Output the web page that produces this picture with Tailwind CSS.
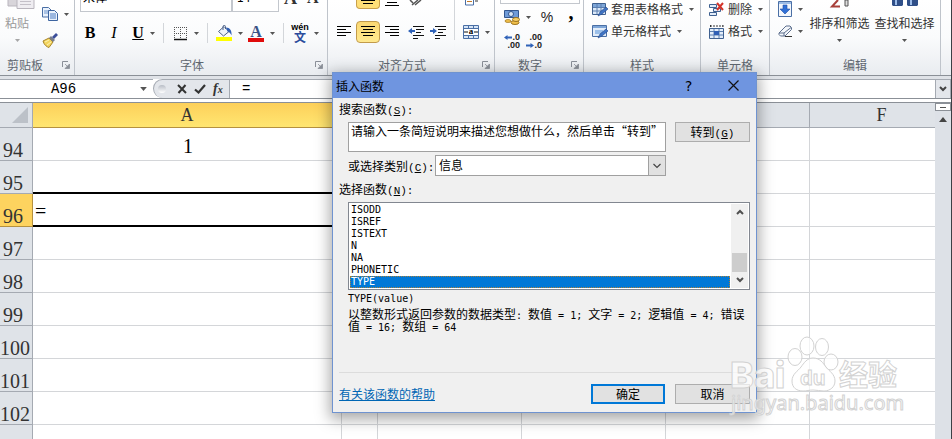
<!DOCTYPE html>
<html lang="zh-CN">
<head>
    <meta charset="UTF-8">
    <meta name="viewport" content="width=device-width, initial-scale=1.0">
    <title>插入函数</title>
    <script src="https://cdn.jsdelivr.net/npm/@tailwindcss/browser@4"></script>
</head>
<body class="relative h-screen overflow-hidden flex flex-col bg-white border-r border-[#3c4046] text-xs text-[#333] font-['Noto_Sans_CJK_SC',sans-serif]">
    <!-- Shared icons -->
    <svg class="hidden">
        <symbol id="down" viewBox="0 0 5 3"><path d="M0 0h5L2.5 3z" fill="#555"/></symbol>
        <symbol id="launcher" viewBox="0 0 8 8"><path d="M.5 6V.5H6" fill="none" stroke="#8a8f98"/><path d="M3 3l3 3M7.500 3v4.500H3z" fill="#8a8f98" stroke="#8a8f98" stroke-width=".8"/></symbol>
        <symbol id="grid" viewBox="0 0 16 15"><path d="M.5 1.500h13v11H.5z" fill="#dce9f8" stroke="#3f6190"/><path d="M1 2h12v3H1z" fill="#7ea6d8"/><path d="M1 5.500h12M1 9h12M5 2v10M9 2v10" stroke="#5a7fb0"/></symbol>
    </svg>

    <!-- Ribbon -->
    <header class="flex shrink-0 h-[76px] border-b border-[#8b9097] bg-linear-to-b from-white via-[#fafbfc] to-[#e9ecf0]">
        <section class="flex flex-col w-[75px] shrink-0 border-r border-[#bfc4cb]">
            <div class="flex h-[54px]">
                <button class="flex flex-col items-center w-[34px] text-[#9a9a9a]">
                    <svg class="w-7 h-[9px] ml-2" viewBox="0 0 28 9"><path d="M1 0v6h12V0" fill="#d8d5da" stroke="#b9b5bd"/><path d="M10 0v8.500h17V0" fill="#efedf1" stroke="#b9b5bd"/><path d="M13 1.500h11M13 4.500h11" stroke="#c4c0c8"/></svg>
                    <span class="leading-7">粘贴</span>
                    <svg class="w-[5px] h-[3px] mt-0.5 opacity-50"><use href="#down"/></svg>
                </button>
                <div class="flex flex-col pl-2">
                    <button class="flex items-center gap-1.5 h-7" aria-label="复制">
                        <svg class="w-4 h-3.5" viewBox="0 0 16 14"><path d="M.5.5h6l2.500 2.500v7H.5z" fill="#eaf2fc" stroke="#4a6fa5"/><path d="M2 4h5M2 6h5" stroke="#6d94cc"/><path d="M6.500 3.500h6L15.500 6.500v7h-9z" fill="#eaf2fc" stroke="#3d64a0"/><path d="M8 7h6M8 9h6M8 11h6" stroke="#4d7cc4"/></svg>
                        <svg class="w-[5px] h-[3px]"><use href="#down"/></svg>
                    </button>
                    <button class="flex items-center h-6" aria-label="格式刷">
                        <svg class="w-4 h-[15px]" viewBox="0 0 16 15"><path d="M1 8l6-3 4 4-4 5.500c-2-.5-5-2.500-6-6.500z" fill="#f2d45e" stroke="#a8842a"/><path d="M3 9l4-2M5 12l4-3" stroke="#fff2b0"/><path d="M7 5l2-2 4 4-2 2z" fill="#777d8c"/><path d="M10 4l4-4 2 2-4 4z" fill="#3c4f9a"/></svg>
                    </button>
                </div>
            </div>
            <footer class="flex items-center h-[21px] text-[#5f6770]"><span class="flex-1 text-center -ml-3">剪贴板</span><svg class="w-2 h-2 mr-1"><use href="#launcher"/></svg></footer>
        </section>

        <section class="flex flex-col w-[253px] shrink-0 border-r border-[#bfc4cb]">
            <div class="flex h-3 pl-[5px] overflow-hidden items-end">
                <select aria-label="字体" class="appearance-none w-[152px] h-6 px-0.5 pb-1.5 shrink-0 bg-white border border-[#c3c7cd] text-black"><option>宋体</option></select>
                <select aria-label="字号" class="appearance-none w-[47px] h-6 px-1 pb-1.5 shrink-0 bg-white border border-[#c3c7cd] text-black"><option>14</option></select>
                <button class="pl-[5px] pb-1.5 leading-4 text-lg font-bold font-['Liberation_Serif',serif]">A</button>
                <button class="pl-2.5 pb-1.5 leading-4 text-base font-bold font-['Liberation_Serif',serif]">A</button>
            </div>
            <div class="flex items-center h-[42px] pl-[3px] text-black">
                <button class="w-6 text-base font-bold font-['Liberation_Serif',serif]">B</button>
                <button class="w-6 text-base italic font-['Liberation_Serif',serif]">I</button>
                <button class="w-6 text-base font-bold underline font-['Liberation_Serif',serif]">U</button>
                <svg class="w-[5px] h-[3px]"><use href="#down"/></svg>
                <span class="w-px h-5 mx-2 bg-[#d3d6da]"></span>
                <button class="flex items-center gap-1.5" aria-label="边框">
                    <svg class="w-4 h-4" viewBox="0 0 16 16"><path d="M2.500 2v11M8.500 2v11M14.500 2v11M2 2.500h13M2 8.500h13" fill="none" stroke="#555" stroke-dasharray="1 1"/><path d="M2 14.500h13" stroke="#111" stroke-width="1.500"/></svg>
                    <svg class="w-[5px] h-[3px]"><use href="#down"/></svg>
                </button>
                <span class="w-px h-5 mx-2 bg-[#d3d6da]"></span>
                <button class="flex items-center gap-1.5" aria-label="填充颜色">
                    <svg class="w-4 h-4" viewBox="0 0 16 16"><path d="M2.500 6.500L8 1.500l5 5-5.500 4.500z" fill="#eef3fa" stroke="#4d6288"/><path d="M7 5V1.500c0-1.500 2.500-1.500 2.500 0V4" fill="none" stroke="#4d6288"/><path d="M10 2.500c4 0 6 3 5.500 8-1-2-2-3.500-4-4z" fill="#2f5fb5"/><path d="M0 12h16v4H0z" fill="#ff0"/></svg>
                    <svg class="w-[5px] h-[3px]"><use href="#down"/></svg>
                </button>
                <button class="flex items-center gap-1.5 ml-[5px]" aria-label="字体颜色">
                    <span class="flex flex-col items-center w-4 border-b-4 border-[#e00b0b] leading-[13px] text-base font-bold text-[#3a5286] font-['Liberation_Serif',serif]">A</span>
                    <svg class="w-[5px] h-[3px]"><use href="#down"/></svg>
                </button>
                <span class="w-px h-5 mx-2 bg-[#d3d6da]"></span>
                <button class="flex items-center gap-1.5">
                    <span class="flex flex-col items-center w-4 text-[9px] leading-[7px]"><span class="font-bold font-['Liberation_Sans',sans-serif]">wén</span><span class="text-xs leading-[11px] font-bold text-[#2c4c9c]">文</span></span>
                    <svg class="w-[5px] h-[3px]"><use href="#down"/></svg>
                </button>
            </div>
            <footer class="flex items-center h-[21px] text-[#5f6770]"><span class="flex-1 text-center">字体</span><svg class="w-2 h-2 mr-1 ml-1.5"><use href="#launcher"/></svg></footer>
        </section>

        <section class="flex flex-col w-[167px] shrink-0 border-r border-[#bfc4cb]">
            <div class="flex h-[54px]">
                <div class="flex flex-col pl-1">
                    <div class="flex h-3">
                        <button class="w-6 h-[9px] ml-6 flex justify-center bg-[#ffdf77] border border-t-0 border-[#c9a04a] rounded-b-sm" aria-label="垂直居中"><svg class="w-3.5 h-2" viewBox="0 0 14 8"><path d="M0 .5h14M2 3.500h10" stroke="#000"/></svg></button>
                        <button class="w-6 h-2 flex justify-center" aria-label="底端对齐"><svg class="w-3.5 h-2" viewBox="0 0 14 8"><path d="M2 2.500h10M0 5.500h14" stroke="#000"/></svg></button>
                        <button class="h-2 ml-1" aria-label="方向"><svg class="w-4 h-2" viewBox="0 0 16 8"><path d="M2 0l3 3M4 5l6-5M7 5l6-5" stroke="#555" stroke-width="1.500"/></svg></button>
                    </div>
                    <div class="flex items-center h-10">
                        <button class="w-6 h-[22px] flex justify-center items-center" aria-label="左对齐"><svg class="w-3.5 h-3" viewBox="0 0 14 12"><path d="M0 .5h14M0 3.500h9M0 6.500h14M0 9.500h9" stroke="#000"/></svg></button>
                        <button class="w-6 h-[22px] flex justify-center items-center bg-linear-to-b from-[#fbd873] to-[#ffe98f] border border-[#c29b4b] rounded-sm" aria-label="居中"><svg class="w-3.5 h-3 shrink-0" viewBox="0 0 14 12"><path d="M0 .5h14M2 3.500h10M0 6.500h14M2 9.500h10" stroke="#000"/></svg></button>
                        <button class="w-6 h-[22px] flex justify-center items-center" aria-label="右对齐"><svg class="w-3.5 h-3" viewBox="0 0 14 12"><path d="M0 .5h14M5 3.500h9M0 6.500h14M5 9.500h9" stroke="#000"/></svg></button>
                        <button class="ml-1" aria-label="减少缩进"><svg class="w-4 h-3.5" viewBox="0 0 16 14"><path d="M5 1.500h11M8 4.500h8M8 7.500h5M5 10.500h11M5 13.500h5" stroke="#111"/><path d="M0 6l4-3v2h3v2H4v2z" fill="#2f62b8"/></svg></button>
                        <button class="ml-1.5" aria-label="增加缩进"><svg class="w-4 h-3.5" viewBox="0 0 16 14"><path d="M5 1.500h11M8 4.500h8M8 7.500h5M5 10.500h11M5 13.500h5" stroke="#111"/><path d="M7 6L3 3v2H0v2h3v2z" fill="#2f62b8"/></svg></button>
                    </div>
                </div>
                <span class="w-px h-10 mx-2 bg-[#d3d6da]"></span>
                <div class="flex flex-col">
                    <button class="flex items-start h-3" aria-label="自动换行"><svg class="w-4 h-1.5" viewBox="0 0 16 6"><path d="M2.500 0v5h8V0" fill="#fff" stroke="#4a6fa5"/><path d="M4 1.500h5" stroke="#c27a2a"/><path d="M12 1h3" stroke="#333"/></svg></button>
                    <button class="flex items-center gap-1.5 h-10" aria-label="合并后居中">
                        <svg class="w-4 h-3.5" viewBox="0 0 16 14"><path d="M.5.5h15v13H.5z" fill="#d5e4f6" stroke="#4a6fa5"/><path d="M1 4h14v6H1z" fill="#fff"/><path d="M5.500 1v3M10.500 1v3M5.500 10v3M10.500 10v3M1 3.500h14M1 10.500h14" stroke="#4a6fa5"/><text x="8" y="9" text-anchor="middle" font-size="9" font-weight="bold" font-family="Liberation Serif">a</text><path d="M1 7h4M11 7h4" stroke="#111"/></svg>
                        <svg class="w-[5px] h-[3px]"><use href="#down"/></svg>
                    </button>
                </div>
            </div>
            <footer class="flex items-center h-[21px] text-[#5f6770]"><span class="flex-1 text-center">对齐方式</span><svg class="w-2 h-2 mr-1 ml-1.5"><use href="#launcher"/></svg></footer>
        </section>

        <section class="flex flex-col w-[89px] shrink-0 border-r border-[#bfc4cb]">
            <div class="flex flex-col h-[54px]">
                <div class="h-1 ml-[5px] w-20 bg-white border border-t-0 border-[#c3c7cd]"></div>
                <div class="flex items-center h-[26px] pl-[9px]">
                    <button class="flex items-center gap-1.5" aria-label="会计数字格式">
                        <svg class="w-4 h-4" viewBox="0 0 16 16"><path d="M.5 1.500h14v7H.5z" fill="#6f9bd8" stroke="#33568f"/><circle cx="7" cy="5" r="2.500" fill="#dbe8f8" stroke="#33568f"/><ellipse cx="11" cy="13.500" rx="4" ry="2" fill="#f1c04a" stroke="#9c7420"/><ellipse cx="12" cy="10.500" rx="3.500" ry="2" fill="#f6d06a" stroke="#9c7420"/><ellipse cx="4" cy="12" rx="3" ry="1.500" fill="#f1c04a" stroke="#9c7420" stroke-width=".7"/></svg>
                        <svg class="w-[5px] h-[3px]"><use href="#down"/></svg>
                    </button>
                    <button class="w-6 ml-1 text-sm leading-4 font-['Liberation_Sans',sans-serif] text-[#222]">%</button>
                    <button class="w-6 pb-2.5 text-xl leading-3 font-bold font-['Liberation_Serif',serif] text-black">,</button>
                </div>
                <div class="flex items-center h-[22px] pl-[9px] gap-1.5 text-[9px] leading-[8px] font-bold font-['Liberation_Sans',sans-serif] text-[#222]">
                    <button class="flex flex-col items-end w-4"><span class="flex items-center"><svg class="w-2 h-[5px]" viewBox="0 0 8 5"><path d="M0 2.500L3.500 0v1.500H8v2H3.500V5z" fill="#2f62b8"/></svg>.0</span><span>.00</span></button>
                    <button class="flex flex-col items-end w-4"><span>.00</span><span class="flex items-center"><svg class="w-2 h-[5px]" viewBox="0 0 8 5"><path d="M8 2.500L4.500 0v1.500H0v2h4.500V5z" fill="#2f62b8"/></svg>.0</span></button>
                </div>
            </div>
            <footer class="flex items-center h-[21px] text-[#5f6770]"><span class="flex-1 text-center">数字</span><svg class="w-2 h-2 mr-1 ml-1.5"><use href="#launcher"/></svg></footer>
        </section>

        <section class="flex flex-col w-[117px] shrink-0 border-r border-[#bfc4cb]">
            <div class="flex flex-col h-[54px] pl-2 whitespace-nowrap">
                <button class="flex items-center h-[18px]"><svg class="w-4 h-[15px] mr-[3px]" viewBox="0 0 16 15"><use href="#grid"/><path d="M6 14l2-4 6-5 2 2-6 5z" fill="#3f74c4" stroke="#24468a" stroke-width=".6"/></svg>套用表格格式<svg class="w-[5px] h-[3px] ml-1.5"><use href="#down"/></svg></button>
                <button class="flex items-center h-[26px]"><svg class="w-4 h-[15px] mr-[3px]" viewBox="0 0 16 15"><path d="M.5 1.500h14v11H.5z" fill="#e3edf9" stroke="#4a6fa5"/><path d="M1 2h13v2H1z" fill="#7ea6d8"/><path d="M3 6h8v4H3z" fill="#9cc0ea"/><path d="M6 14l2-4 6-5 2 2-6 5z" fill="#3f74c4" stroke="#24468a" stroke-width=".6"/></svg>单元格样式<svg class="w-[5px] h-[3px] ml-1.5"><use href="#down"/></svg></button>
            </div>
            <footer class="h-[21px] leading-[21px] text-center text-[#5f6770]">样式</footer>
        </section>

        <section class="flex flex-col w-[69px] shrink-0 border-r border-[#bfc4cb]">
            <div class="flex flex-col h-[54px] pl-2 whitespace-nowrap">
                <button class="flex items-center h-[18px]"><svg class="w-4 h-[15px] mr-[3px]" viewBox="0 0 16 15"><path d="M.5 2.500h7v3h-7zM.5 10.500h7v3h-7zM4.500 6.500h7v3h-7z" fill="#e3edf9" stroke="#3f6190"/><path d="M8 1l6 7M14 1L8 8" stroke="#d4342a" stroke-width="2"/></svg>删除<svg class="w-[5px] h-[3px] ml-1.5"><use href="#down"/></svg></button>
                <button class="flex items-center h-[26px]"><svg class="w-4 h-[15px] mr-[3px]" viewBox="0 0 16 15"><path d="M1.500 1v2M14 1v2M1 2h13" stroke="#333" stroke-dasharray="2 1"/><path d="M.5 4.500h14v10H.5z" fill="#e3edf9" stroke="#3f6190"/><path d="M1 7.500h13M1 11h13M5 5v9M10 5v9" stroke="#5a7fb0"/><path d="M5 7h5v4H5z" fill="#2f5fb5"/></svg>格式<svg class="w-[5px] h-[3px] ml-1.5"><use href="#down"/></svg></button>
            </div>
            <footer class="h-[21px] leading-[21px] text-center text-[#5f6770]">单元格</footer>
        </section>

        <section class="flex flex-col w-[171px] shrink-0 border-r border-[#bfc4cb]">
            <div class="flex h-[54px] pl-2 whitespace-nowrap">
                <div class="flex flex-col w-[31px]">
                    <button class="flex items-center gap-1.5 h-[18px]" aria-label="填充"><svg class="w-3.5 h-4" viewBox="0 0 14 16"><path d="M.5.5h13v15H.5z" fill="#f2f6fc" stroke="#4a6fa5"/><path d="M1 1h12v2H1z" fill="#9cbce6"/><path d="M5 4h4v4h3l-5 5-5-5h3z" fill="#2f6fd6" stroke="#1f4fa5" stroke-width=".6"/></svg><svg class="w-[5px] h-[3px]"><use href="#down"/></svg></button>
                    <button class="flex items-center gap-1.5 h-[26px]" aria-label="清除"><svg class="w-3.5 h-3" viewBox="0 0 14 12"><path d="M1 8l7-7h4l1.500 1.500v2L7 11H2.500L1 9.500z" fill="#f4f7fb" stroke="#5d6f8d"/><path d="M1 8h5l7-5.500M6 8v3" fill="none" stroke="#5d6f8d"/><path d="M7 11.500h7" stroke="#333"/></svg><svg class="w-[5px] h-[3px]"><use href="#down"/></svg></button>
                </div>
                <button class="flex flex-col items-center w-[61px]">
                    <svg class="w-6 h-[9px]" viewBox="0 0 24 9"><path d="M10 0L4 6.500h8" fill="none" stroke="#a8403a" stroke-width="2"/><path d="M17 0h3v6h-3z" fill="#ddd" stroke="#555"/></svg>
                    <span class="leading-7">排序和筛选</span>
                    <svg class="w-[5px] h-[3px] mt-0.5"><use href="#down"/></svg>
                </button>
                <button class="flex flex-col items-center w-[61px] ml-1">
                    <svg class="w-7 h-[9px]" viewBox="0 0 28 9"><path d="M1 0h11v5l-1 1H2L1 5zM16 0h11v5l-1 1h-9l-1-1z" fill="#2f4f88"/><path d="M5 0v5M20 0v5" stroke="#9bbbe8" stroke-width="2"/></svg>
                    <span class="leading-7">查找和选择</span>
                    <svg class="w-[5px] h-[3px] mt-0.5"><use href="#down"/></svg>
                </button>
            </div>
            <footer class="h-[21px] leading-[21px] text-center text-[#5f6770]">编辑</footer>
        </section>
    </header>

    <!-- Formula bar -->
    <div class="flex shrink-0 h-[23px] border-t-[3px] border-t-[#dfe2e7] border-b border-b-[#8b9097] bg-white text-black">
        <input aria-label="名称框" value="A96" class="w-[127px] border-t border-[#a5aab2] text-center text-[14px] leading-4 font-['Liberation_Mono',monospace]">
        <button class="w-[26px] flex items-center justify-center border-t border-[#a5aab2] pl-1.5" aria-label="名称列表"><svg class="w-[7px] h-1"><use href="#down"/></svg></button>
        <div class="flex items-center w-[77px] pl-1 gap-[7px] rounded-l-full border border-b-0 border-[#a5aab2] bg-[#e3e6eb]">
            <span class="w-2 h-2 mr-1 rounded-full bg-linear-to-b from-[#b8bdc6] to-white"></span>
            <button aria-label="取消输入"><svg class="w-2.5 h-2.5" viewBox="0 0 10 10"><path d="M1 1l8 8M8.500 1L1.500 9" stroke="#333" stroke-width="2"/></svg></button>
            <button aria-label="输入"><svg class="w-3 h-2.5" viewBox="0 0 12 10"><path d="M1 5.500l3.500 3L11 1" fill="none" stroke="#333" stroke-width="2.200"/></svg></button>
            <button class="text-sm leading-4 italic font-bold font-['Liberation_Serif',serif] text-[#333]">f<sub class="text-[10px] bottom-0">x</sub></button>
        </div>
        <input aria-label="编辑栏" value="=" class="flex-1 min-w-0 pl-3 border-t border-[#a5aab2] text-[14px] leading-4 font-['Liberation_Mono',monospace]">
        <button class="w-4 flex items-center justify-center bg-[#e3e6eb] border border-b-0 border-[#a5aab2]" aria-label="展开编辑栏"><svg class="w-2 h-1.5" viewBox="0 0 8 6"><path d="M1 1l3 3 3-3" fill="none" stroke="#444" stroke-width="2"/></svg></button>
    </div>

    <!-- Worksheet -->
    <main class="flex flex-1 min-h-0 mt-[3px] border-t border-[#8b9097]">
        <div class="flex-1 min-w-0 overflow-hidden">
            <table class="table-fixed w-[954px] border-separate border-spacing-0 text-xl leading-5 font-['Liberation_Serif',serif]">
                <colgroup>
                    <col class="w-[33px]"><col class="w-[309px]"><col class="w-9"><col class="w-36"><col class="w-36"><col class="w-36"><col class="w-36">
                </colgroup>
                <thead>
                    <tr class="h-[25px] bg-[#dfe3e8] text-lg leading-5 text-[#333]">
                        <th class="p-0 border-r border-b border-[#a5aab2]"><svg class="w-4 h-4 ml-3" viewBox="0 0 16 16"><path d="M16 0v16H0z" fill="#bcc1c8"/></svg></th>
                        <th class="p-0 border-r border-b border-[#b5913f] bg-linear-to-b from-[#fdd05a] to-[#ffe671] font-normal">A</th>
                        <th class="p-0 border-r border-b border-[#a5aab2] font-normal">B</th>
                        <th class="p-0 border-r border-b border-[#a5aab2] font-normal">C</th>
                        <th class="p-0 border-r border-b border-[#a5aab2] font-normal">D</th>
                        <th class="p-0 border-r border-b border-[#a5aab2] font-normal">E</th>
                        <th class="p-0 border-r border-b border-[#a5aab2] font-normal">F</th>
                    </tr>
                </thead>
                <tbody id="rows"></tbody>
            </table>
        </div>
        <div class="flex flex-col w-4 bg-[#dde1e7]">
            <div class="h-2 bg-white border border-[#8b9097] flex items-center px-1"><span class="flex-1 h-px bg-[#555]"></span></div>
            <button class="h-[17px] flex items-center justify-center" aria-label="向上滚动"><svg class="w-2 h-[5px]" viewBox="0 0 8 5"><path d="M0 5l4-5 4 5z" fill="#444"/></svg></button>
        </div>
    </main>

    <!-- Insert function dialog -->
    <form class="absolute left-[332px] top-[72px] w-[425px] h-[341px] flex flex-col border border-[#6f93d0] bg-[#f0f0f0] text-black leading-4 shadow-[0_4px_14px_2px_rgba(0,0,0,0.35)]">
        <div class="flex items-center h-[25px] shrink-0 pl-[3px] bg-[#6f95e0]">
            <h1 class="flex-1">插入函数</h1>
            <button type="button" class="w-[45px] text-sm font-['DejaVu_Sans_Mono',monospace]">?</button>
            <button type="button" class="w-[45px] h-6 flex items-center justify-center" aria-label="关闭"><svg class="w-[11px] h-[11px]" viewBox="0 0 11 11"><path d="M.5.5l10 10M10.500.5l-10 10" stroke="#111" stroke-width="1.200"/></svg></button>
        </div>
        <div class="flex flex-col flex-1 px-1.5">
            <label for="search" class="h-6 leading-[22px]">搜索函数<span class="font-['Liberation_Mono',monospace] text-[11px] leading-[8px]">(<u>S</u>):</span></label>
            <div class="flex items-start gap-[9px] pl-[9px]">
                <textarea id="search" class="flex-1 min-w-0 h-[30px] pl-0.5 overflow-hidden whitespace-nowrap resize-none bg-white border border-[#a0a0a0]">请输入一条简短说明来描述您想做什么，然后单击“转到”</textarea>
                <button type="button" class="w-[75px] h-5 leading-4 bg-[#e1e1e1] border border-[#adadad]">转到<span class="font-['Liberation_Mono',monospace] text-[11px] leading-[8px]">(<u>G</u>)</span></button>
            </div>
            <div class="flex items-center h-[21px] mt-[3px] pl-[9px]">
                <label for="category" class="w-[87px] whitespace-nowrap">或选择类别<span class="font-['Liberation_Mono',monospace] text-[11px] leading-[8px]">(<u>C</u>):</span></label>
                <div class="relative w-[231px]">
                    <select id="category" class="appearance-none block w-full h-[21px] pl-[3px] pb-px leading-4 bg-white border border-[#a0a0a0]"><option>信息</option></select>
                    <span class="absolute right-0 inset-y-0 w-[18px] flex items-center justify-center bg-[#e1e1e1] border border-[#a0a0a0] pointer-events-none"><svg class="w-2 h-1.5" viewBox="0 0 8 6"><path d="M.5 1l3.500 3.500L7.500 1" fill="none" stroke="#444" stroke-width="1.200"/></svg></span>
                </div>
            </div>
            <p id="list-label" class="h-[26px] leading-[26px]">选择函数<span class="font-['Liberation_Mono',monospace] text-[11px] leading-[8px]">(<u>N</u>):</span></p>
            <div class="flex ml-[9px] h-[88px] p-px border border-[#828790] bg-white">
                <ul role="listbox" aria-labelledby="list-label" class="flex-1 pr-px text-[10px] leading-3 font-['DejaVu_Sans_Mono',monospace]">
                    <li role="option" class="pl-px">ISODD</li>
                    <li role="option" class="pl-px">ISREF</li>
                    <li role="option" class="pl-px">ISTEXT</li>
                    <li role="option" class="pl-px">N</li>
                    <li role="option" class="pl-px">NA</li>
                    <li role="option" class="pl-px">PHONETIC</li>
                    <li role="option" aria-selected="true" class="pl-px bg-[#0078d7] text-white outline-1 -outline-offset-1 outline-dotted outline-[#a8803c]">TYPE</li>
                </ul>
                <div class="flex flex-col items-center w-[17px] bg-[#f0f0f0]">
                    <svg class="w-2 h-4" viewBox="0 0 8 16"><path d="M1 10l3-3 3 3" fill="none" stroke="#505050" stroke-width="2"/></svg>
                    <span class="w-[15px] h-[19px] mt-auto bg-[#cdcdcd]"></span>
                    <svg class="w-2 h-4" viewBox="0 0 8 16"><path d="M1 6l3 3 3-3" fill="none" stroke="#505050" stroke-width="2"/></svg>
                </div>
            </div>
            <p class="pl-[9px] mt-px leading-4 text-[10px] font-['DejaVu_Sans_Mono',monospace]">TYPE(value)</p>
            <p class="pl-[9px] mt-px leading-3 whitespace-nowrap">以整数形式返回参数的数据类型<span class="font-['DejaVu_Sans_Mono',monospace] text-[10px] leading-[8px]">: </span>数值<span class="font-['DejaVu_Sans_Mono',monospace] text-[10px] leading-[8px]"> = 1; </span>文字<span class="font-['DejaVu_Sans_Mono',monospace] text-[10px] leading-[8px]"> = 2; </span>逻辑值<span class="font-['DejaVu_Sans_Mono',monospace] text-[10px] leading-[8px]"> = 4; </span>错误<br>值<span class="font-['DejaVu_Sans_Mono',monospace] text-[10px] leading-[8px]"> = 16; </span>数组<span class="font-['DejaVu_Sans_Mono',monospace] text-[10px] leading-[8px]"> = 64</span></p>
            <div class="flex items-center gap-2.5 mt-auto h-10 border-t border-[#dcdcdc] pt-1.5 pb-1">
                <a href="#" class="text-[#0066b4] underline">有关该函数的帮助</a>
                <button type="submit" class="ml-auto w-[74px] h-5 leading-4 bg-[#e1e1e1] border-2 border-[#0078d7]">确定</button>
                <button type="button" class="w-[75px] h-5 leading-4 bg-[#e1e1e1] border border-[#adadad]">取消</button>
            </div>
        </div>
    </form>

    <!-- Watermark -->
    <svg class="absolute left-[728px] top-[334px] w-[176px] h-[88px] pointer-events-none" viewBox="0 0 176 88" fill="#fff" fill-opacity=".7" stroke="#d2d2d2">
        <text x="2" y="54" font-size="36" font-weight="800" font-family="Inter">Bai</text>
        <ellipse cx="67" cy="23" rx="7" ry="8.500"/>
        <ellipse cx="79" cy="12" rx="7" ry="9"/>
        <ellipse cx="94" cy="13" rx="6.500" ry="8.500"/>
        <ellipse cx="103" cy="28" rx="7" ry="8"/>
        <path d="M85 24c-6 0-9 5-12 9s-9 7-9 14 5 10 11 10c4 0 6-1 10-1s7 1 11 1c6 0 11-4 11-10 0-7-6-10-9-14s-6-9-13-9z"/>
        <text x="72" y="51" font-size="21" font-weight="bold" font-family="Liberation Sans">du</text>
        <text x="111" y="52" font-size="29" font-weight="bold" font-family="Noto Sans CJK SC">经验</text>
        <text x="3" y="76" font-size="20" font-family="Noto Sans">jingyan.baidu.com</text>
    </svg>

    <script>
        const values = { 94: '1', 96: '=' };
        let html = '';

        for (let row = 94; row <= 103; row++) {
            // The active row has a highlighted header and a black frame
            const head = row === 96 ? 'bg-[#fdd35f] border-[#b5913f]' : 'bg-[#dfe3e8] border-[#a5aab2]';
            const cell = row === 95 || row === 96 ? 'border-b-2 border-b-black' : 'border-b border-b-[#d4d6d9]';
            const align = row === 96 ? 'text-left' : 'text-center';
            // The last row is only partly in view
            const label = row === 103 ? '' : row;

            html += `<tr class="h-[33px]">
                <th class="p-0 pr-1.5 align-bottom font-normal text-[#333] border-r border-b ${head}">${label}</th>
                <td class="p-0 pl-0.5 pb-1 align-bottom text-black border-r border-r-[#d4d6d9] ${cell} ${align}">${values[row] || ''}</td>
                ${'<td class="p-0 border-r border-b border-[#d4d6d9]"></td>'.repeat(5)}
            </tr>`;
        }
        document.getElementById('rows').innerHTML = html;
    </script>
</body>
</html>
